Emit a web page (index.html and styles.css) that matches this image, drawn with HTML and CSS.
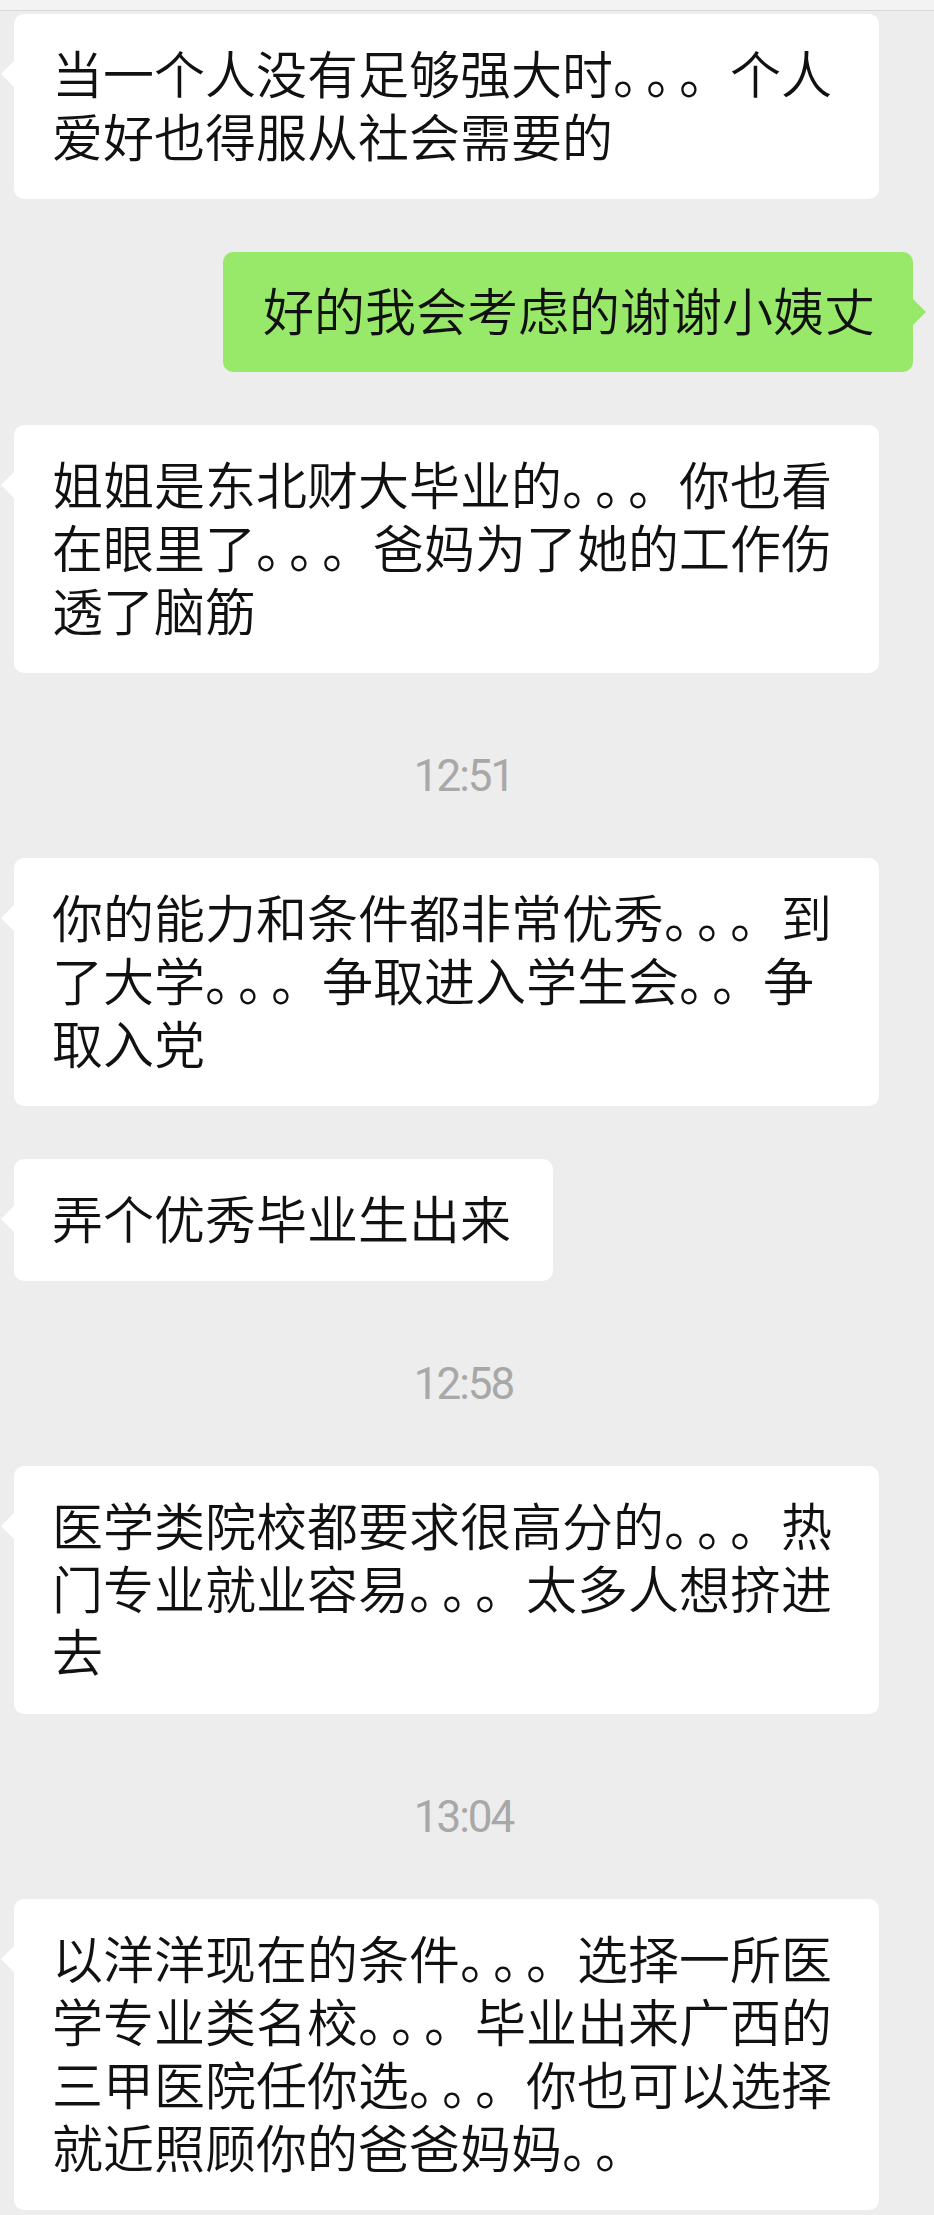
FILE: index.html
```html
<!DOCTYPE html>
<html lang="zh-CN">
<head>
<meta charset="UTF-8">
<meta name="viewport" content="width=device-width, initial-scale=1.0">
<title>聊天记录</title>
<link rel="stylesheet" href="styles.css">
</head>
<body>

<div class="topbar"></div>

<div class="chat">
    <div class="msg left">
        <div class="bubble">当一个人没有足够强大时<span class="tight">。。</span>。个人爱好也得服从社会需要的</div>
    </div>

    <div class="msg right">
        <div class="bubble green">好的我会考虑的谢谢小姨丈</div>
    </div>

    <div class="msg left">
        <div class="bubble">姐姐是东北财大毕业的<span class="tight">。。</span>。你也看在眼里了<span class="tight">。。</span>。爸妈为了她的工作伤透了脑筋</div>
    </div>

    <div class="time">12:51</div>

    <div class="msg left">
        <div class="bubble">你的能力和条件都非常优秀<span class="tight">。。</span>。到了大学<span class="tight">。。</span>。争取进入学生会<span class="tight">。</span>。争取入党</div>
    </div>

    <div class="msg left">
        <div class="bubble">弄个优秀毕业生出来</div>
    </div>

    <div class="time">12:58</div>

    <div class="msg left">
        <div class="bubble">医学类院校都要求很高分的<span class="tight">。。</span>。热门专业就业容易<span class="tight">。。</span>。太多人想挤进去</div>
    </div>

    <div class="time">13:04</div>

    <div class="msg left">
        <div class="bubble">以洋洋现在的条件<span class="tight">。。</span>。选择一所医学专业类名校<span class="tight">。。</span>。毕业出来广西的三甲医院任你选<span class="tight">。。</span>。你也可以选择就近照顾你的爸爸妈妈<span class="tight">。</span>。</div>
    </div>
</div>

</body>
</html>
```

FILE: styles.css
```css
body {
    margin: 0;
    padding: 0;
    background-color: #ededed;
    font-family: "Noto Sans CJK SC", "Noto Sans", sans-serif;
    color: #111;
}

.topbar {
    height: 10px;
    background-color: #f3f3f3;
    border-bottom: 1px solid #d8d8d8;
}

.chat {
    display: flex;
    flex-direction: column;
    gap: 53px;
    padding: 3px 21px 0 14px;
}

.msg {
    display: flex;
}

.msg.right {
    justify-content: flex-end;
}

.bubble {
    position: relative;
    max-width: 785px;
    padding: 27px 42px 32px 38px;
    background-color: #fff;
    border-radius: 10px;
    font-size: 51px;
    font-weight: 350;
    line-height: 63px;
    text-spacing-trim: space-all;
    font-kerning: none;
}

/* little tail pointing at the avatar */
.bubble::before {
    content: "";
    position: absolute;
    top: 47px;
    left: -13px;
    border-top: 13px solid transparent;
    border-bottom: 13px solid transparent;
    border-right: 13px solid #fff;
}

.bubble.green {
    padding: 26px 38px 31px 40px;
    background-color: #98e96a;
}

.bubble.green::before {
    left: auto;
    top: 47px;
    right: -13px;
    border-right: none;
    border-left: 13px solid #98e96a;
}

/* consecutive punctuation gets squeezed like on the phone */
.tight {
    letter-spacing: -18px;
}

.time {
    padding: 30px 0 9px;
    line-height: 40px;
    text-align: center;
    font-family: Roboto, "Liberation Sans", sans-serif;
    font-size: 44px;
    letter-spacing: -2px;
    color: #a8a8a8;
}
```
